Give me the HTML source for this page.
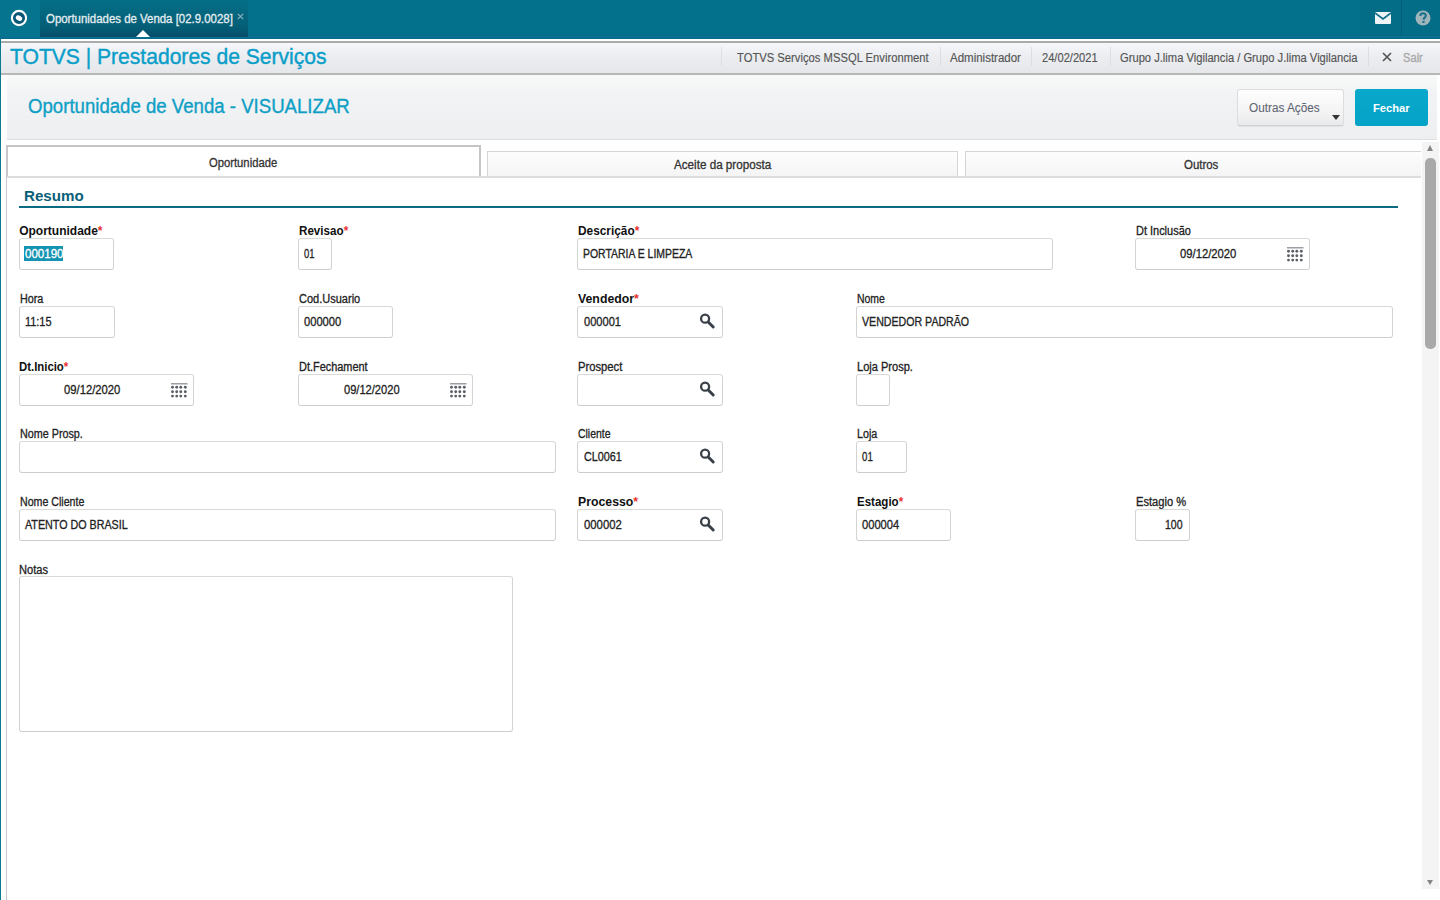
<!DOCTYPE html>
<html><head><meta charset="utf-8">
<style>
*{box-sizing:border-box;margin:0;padding:0}
html,body{width:1440px;height:900px;overflow:hidden;background:#fff;font-family:"Liberation Sans",sans-serif;position:relative}
.abs{position:absolute}
.tx{position:absolute;line-height:1;white-space:nowrap;transform-origin:0 50%;-webkit-text-stroke:0.3px}
.tx[style*="bold"]{-webkit-text-stroke:0}
.inp{position:absolute;height:32px;border:1px solid #d3d3d3;border-top-color:#d9d9d9;border-bottom-color:#cdcdcd;border-radius:3px;background:#fff}
</style></head><body>

<div class="abs" style="left:0;top:0;width:1440px;height:39px;background:#04718c"></div>
<div class="abs" style="left:0;top:35px;width:1440px;height:4px;background:linear-gradient(#056a85,#0a7499 50%,#046682)"></div>
<div class="abs" style="left:0;top:0;width:40px;height:36px;background:#05748e"></div>
<div class="abs" style="left:40px;top:0;width:208px;height:37px;background:linear-gradient(#056f88,#045d75 75%,#064d6a)"></div>
<svg class="abs" style="left:10px;top:9px" width="18" height="18" viewBox="0 0 18 18"><circle cx="9" cy="9" r="7.1" fill="#0a5878" stroke="#fff" stroke-width="2.1"/><ellipse cx="9" cy="9.1" rx="3.4" ry="2.5" transform="rotate(30 9 9.1)" fill="#fff"/></svg>
<div class="tx" style="left:45.80px;top:13px;font-size:12px;color:#e4eef1;transform:scaleX(0.9526);">Oportunidades de Venda [02.9.0028]</div>
<svg class="abs" style="left:237px;top:13px" width="7" height="7" viewBox="0 0 7 7"><path d="M0.8 0.8 L6.2 6.2 M6.2 0.8 L0.8 6.2" stroke="#8fb6c4" stroke-width="1.1"/></svg>
<div class="abs" style="left:136.2px;top:29.7px;width:0;height:0;border-left:7.6px solid transparent;border-right:7.6px solid transparent;border-bottom:7.1px solid #fff"></div>
<div class="abs" style="left:1360px;top:0;width:80px;height:36px;background:rgba(0,40,60,0.06)"></div>
<div class="abs" style="left:1401px;top:0;width:1px;height:36px;background:rgba(0,50,70,0.25)"></div>
<svg class="abs" style="left:1375px;top:12px" width="16" height="12" viewBox="0 0 16 12"><rect x="0" y="0" width="16" height="12" rx="1" fill="#eef3f5"/><path d="M0 1 L8 7 L16 1" fill="none" stroke="#0a6f88" stroke-width="1.6"/></svg>
<svg class="abs" style="left:1415px;top:10px" width="16" height="16" viewBox="0 0 16 16"><circle cx="8" cy="8" r="7.5" fill="#9fb5bc"/><path d="M5.3 6 Q5.3 3.2 8 3.2 Q10.8 3.2 10.8 5.8 Q10.8 7.3 9 8.2 L8.6 9.8" fill="none" stroke="#1a7088" stroke-width="2"/><rect x="7.4" y="11" width="2.2" height="2" fill="#1a7088"/></svg>
<div class="abs" style="left:0;top:39px;width:1440px;height:2px;background:#fff"></div>
<div class="abs" style="left:0;top:41px;width:1440px;height:34px;background:linear-gradient(#f6f7fa,#eceef1 40%,#e5e7ea);border-top:2px solid #a9abab;border-bottom:2px solid #b6b8b8"></div>
<div class="tx" style="left:10.00px;top:46px;font-size:22px;color:#0a9ec9;transform:scaleX(0.9577);-webkit-text-stroke:0.4px">TOTVS | Prestadores de Serviços</div>
<div class="abs" style="left:721px;top:47px;width:1px;height:19px;background:#dcdfe2"></div>
<div class="abs" style="left:940px;top:47px;width:1px;height:19px;background:#dcdfe2"></div>
<div class="abs" style="left:1031px;top:47px;width:1px;height:19px;background:#dcdfe2"></div>
<div class="abs" style="left:1110px;top:47px;width:1px;height:19px;background:#dcdfe2"></div>
<div class="abs" style="left:1368px;top:47px;width:1px;height:19px;background:#dcdfe2"></div>
<div class="tx" style="left:737.00px;top:52px;font-size:12px;color:#555;transform:scaleX(0.9361);-webkit-text-stroke:0.15px">TOTVS Serviços MSSQL Environment</div>
<div class="tx" style="left:950.30px;top:52px;font-size:12px;color:#555;transform:scaleX(0.9581);-webkit-text-stroke:0.15px">Administrador</div>
<div class="tx" style="left:1042.20px;top:52px;font-size:12px;color:#555;transform:scaleX(0.9267);-webkit-text-stroke:0.15px">24/02/2021</div>
<div class="tx" style="left:1120.30px;top:52px;font-size:12px;color:#555;transform:scaleX(0.9314);-webkit-text-stroke:0.15px">Grupo J.lima Vigilancia / Grupo J.lima Vigilancia</div>
<div class="tx" style="left:1403.00px;top:52px;font-size:12px;color:#a8a8a8;transform:scaleX(0.9286);">Sair</div>
<svg class="abs" style="left:1382px;top:52px" width="10" height="10" viewBox="0 0 10 10"><path d="M1 1 L9 9 M9 1 L1 9" stroke="#555" stroke-width="1.7"/></svg>
<div class="abs" style="left:0;top:39px;width:1px;height:861px;background:#0b7a8f"></div>
<div class="abs" style="left:7px;top:75px;width:1430px;height:65px;background:linear-gradient(#f8f9f9,#f2f3f4 30%,#eeeff0);border-bottom:1.5px solid #dcdedf"></div>
<div class="tx" style="left:28.00px;top:96px;font-size:20px;color:#0e9fc6;transform:scaleX(0.9306);-webkit-text-stroke:0.35px">Oportunidade de Venda - VISUALIZAR</div>
<div class="abs" style="left:1237px;top:89px;width:107px;height:37px;border:1px solid #dcdddf;border-bottom-color:#cfd0d2;border-radius:3px;background:linear-gradient(#fefefe,#f4f4f5 60%,#e9eaeb);box-shadow:0 1px 1px rgba(0,0,0,0.06)"></div>
<div class="tx" style="left:1248.70px;top:102px;font-size:12px;color:#5f6674;transform:scaleX(0.9806);-webkit-text-stroke:0.1px">Outras Ações</div>
<div class="abs" style="left:1332px;top:115px;width:0;height:0;border-left:4.5px solid transparent;border-right:4.5px solid transparent;border-top:5px solid #333"></div>
<div class="abs" style="left:1355px;top:89px;width:73px;height:37px;border-radius:3px;background:linear-gradient(#0aa9cc,#03a2c6)"></div>
<div class="tx" style="left:1372.80px;top:103px;font-size:11px;color:#fff;font-weight:bold;transform:scaleX(1.0108);">Fechar</div>
<div class="abs" style="left:6px;top:145px;width:475px;height:32px;background:#fff;border:2px solid #c4c5c6;border-bottom:none"></div>
<div class="abs" style="left:487px;top:151px;width:471px;height:26px;border:1px solid #d4d5d6;border-bottom:none;background:linear-gradient(#fdfdfd,#f4f4f4)"></div>
<div class="abs" style="left:965px;top:151px;width:456px;height:26px;border:1px solid #d4d5d6;border-bottom:none;border-right:none;background:linear-gradient(#fdfdfd,#f4f4f4)"></div>
<div class="abs" style="left:6px;top:176px;width:1415px;height:2px;background:#dcdddd"></div>
<div class="abs" style="left:6px;top:145px;width:1px;height:755px;background:#c8c9ca"></div>
<div class="tx" style="left:209.40px;top:157px;font-size:12px;color:#333;transform:scaleX(0.9370);">Oportunidade</div>
<div class="tx" style="left:673.50px;top:159px;font-size:12px;color:#333;transform:scaleX(0.9720);">Aceite da proposta</div>
<div class="tx" style="left:1184.40px;top:159px;font-size:12px;color:#333;transform:scaleX(0.9528);">Outros</div>
<div class="tx" style="left:24.00px;top:188px;font-size:15px;color:#0a5f78;font-weight:bold;transform:scaleX(1.0102);">Resumo</div>
<div class="abs" style="left:19px;top:206px;width:1379px;height:2px;background:#0b6b84"></div>
<div class="abs" style="left:1422px;top:142px;width:17px;height:747px;background:#f4f4f4"></div>
<div class="abs" style="left:1425px;top:158px;width:10.5px;height:191px;background:#a9a9a9;border-radius:5px"></div>
<div class="abs" style="left:1426.5px;top:144.5px;width:0;height:0;border-left:3.6px solid transparent;border-right:3.6px solid transparent;border-bottom:6.6px solid #858585"></div>
<div class="abs" style="left:1426.7px;top:879.5px;width:0;height:0;border-left:3.5px solid transparent;border-right:3.5px solid transparent;border-top:5.6px solid #858585"></div>
<div class="tx" style="left:19.20px;top:225px;font-size:12px;color:#111;font-weight:bold;">Oportunidade<span style="color:#e8322e">*</span></div>
<div class="inp" style="left:19px;top:238px;width:95px;height:32px"></div>
<div class="abs" style="left:24px;top:246px;width:39px;height:15px;background:#1593b3"></div>
<div class="tx" style="left:24.50px;top:248px;font-size:12px;color:#fff;transform:scaleX(0.9625);">000190</div>
<div class="tx" style="left:298.75px;top:225px;font-size:12px;color:#111;font-weight:bold;transform:scaleX(0.9696);">Revisao<span style="color:#e8322e">*</span></div>
<div class="inp" style="left:298px;top:238px;width:34px;height:32px"></div>
<div class="tx" style="left:304.00px;top:248px;font-size:12px;color:#222;transform:scaleX(0.7857);">01</div>
<div class="tx" style="left:578.00px;top:225px;font-size:12px;color:#111;font-weight:bold;transform:scaleX(0.9877);">Descrição<span style="color:#e8322e">*</span></div>
<div class="inp" style="left:577px;top:238px;width:476px;height:32px"></div>
<div class="tx" style="left:583.00px;top:248px;font-size:12px;color:#222;transform:scaleX(0.8698);">PORTARIA E LIMPEZA</div>
<div class="tx" style="left:1136.00px;top:225px;font-size:12px;color:#222;transform:scaleX(0.9133);">Dt Inclusão</div>
<div class="inp" style="left:1135px;top:238px;width:175px;height:32px"></div>
<div class="tx" style="left:1180.40px;top:248px;font-size:12px;color:#222;transform:scaleX(0.9383);">09/12/2020</div>
<svg class="abs" style="left:1287.3px;top:246.6px" width="17" height="15" viewBox="0 0 17 15"><rect x="0" y="0" width="16.5" height="1.5" fill="#9a9ea3"/><circle cx="1.5" cy="4.2" r="1.45" fill="#5b6068"/><circle cx="5.7" cy="4.2" r="1.45" fill="#5b6068"/><circle cx="9.8" cy="4.2" r="1.45" fill="#5b6068"/><circle cx="14.3" cy="4.2" r="1.45" fill="#5b6068"/><circle cx="1.5" cy="8.7" r="1.45" fill="#5b6068"/><circle cx="5.7" cy="8.7" r="1.45" fill="#5b6068"/><circle cx="9.8" cy="8.7" r="1.45" fill="#5b6068"/><circle cx="14.3" cy="8.7" r="1.45" fill="#5b6068"/><circle cx="1.5" cy="13.1" r="1.45" fill="#5b6068"/><circle cx="5.7" cy="13.1" r="1.45" fill="#5b6068"/><circle cx="9.8" cy="13.1" r="1.45" fill="#5b6068"/><circle cx="14.3" cy="13.1" r="1.45" fill="#5b6068"/></svg>
<div class="tx" style="left:19.70px;top:293px;font-size:12px;color:#222;transform:scaleX(0.8962);">Hora</div>
<div class="inp" style="left:19px;top:306px;width:96px;height:32px"></div>
<div class="tx" style="left:25.30px;top:316px;font-size:12px;color:#222;transform:scaleX(0.9103);">11:15</div>
<div class="tx" style="left:298.60px;top:293px;font-size:12px;color:#222;transform:scaleX(0.9179);">Cod.Usuario</div>
<div class="inp" style="left:298px;top:306px;width:95px;height:32px"></div>
<div class="tx" style="left:303.90px;top:316px;font-size:12px;color:#222;transform:scaleX(0.9300);">000000</div>
<div class="tx" style="left:577.50px;top:293px;font-size:12px;color:#111;font-weight:bold;transform:scaleX(1.0255);">Vendedor<span style="color:#e8322e">*</span></div>
<div class="inp" style="left:577px;top:306px;width:146px;height:32px"></div>
<div class="tx" style="left:583.90px;top:316px;font-size:12px;color:#222;transform:scaleX(0.9225);">000001</div>
<svg class="abs" style="left:697px;top:310px" width="20" height="22" viewBox="0 0 20 22"><circle cx="8.1" cy="8.7" r="4" fill="none" stroke="#3a4048" stroke-width="2.3"/><path d="M11.2 12 L16.2 17" stroke="#3a4048" stroke-width="3" stroke-linecap="round"/></svg>
<div class="tx" style="left:856.70px;top:293px;font-size:12px;color:#222;transform:scaleX(0.8688);">Nome</div>
<div class="inp" style="left:856px;top:306px;width:537px;height:32px"></div>
<div class="tx" style="left:862.20px;top:316px;font-size:12px;color:#222;transform:scaleX(0.8843);">VENDEDOR PADRÃO</div>
<div class="tx" style="left:19.40px;top:361px;font-size:12px;color:#111;font-weight:bold;transform:scaleX(0.9468);">Dt.Inicio<span style="color:#e8322e">*</span></div>
<div class="inp" style="left:19px;top:374px;width:175px;height:32px"></div>
<div class="tx" style="left:64.20px;top:384px;font-size:12px;color:#222;transform:scaleX(0.9367);">09/12/2020</div>
<svg class="abs" style="left:171.3px;top:382.6px" width="17" height="15" viewBox="0 0 17 15"><rect x="0" y="0" width="16.5" height="1.5" fill="#9a9ea3"/><circle cx="1.5" cy="4.2" r="1.45" fill="#5b6068"/><circle cx="5.7" cy="4.2" r="1.45" fill="#5b6068"/><circle cx="9.8" cy="4.2" r="1.45" fill="#5b6068"/><circle cx="14.3" cy="4.2" r="1.45" fill="#5b6068"/><circle cx="1.5" cy="8.7" r="1.45" fill="#5b6068"/><circle cx="5.7" cy="8.7" r="1.45" fill="#5b6068"/><circle cx="9.8" cy="8.7" r="1.45" fill="#5b6068"/><circle cx="14.3" cy="8.7" r="1.45" fill="#5b6068"/><circle cx="1.5" cy="13.1" r="1.45" fill="#5b6068"/><circle cx="5.7" cy="13.1" r="1.45" fill="#5b6068"/><circle cx="9.8" cy="13.1" r="1.45" fill="#5b6068"/><circle cx="14.3" cy="13.1" r="1.45" fill="#5b6068"/></svg>
<div class="tx" style="left:298.60px;top:361px;font-size:12px;color:#222;transform:scaleX(0.9105);">Dt.Fechament</div>
<div class="inp" style="left:298px;top:374px;width:175px;height:32px"></div>
<div class="tx" style="left:343.50px;top:384px;font-size:12px;color:#222;transform:scaleX(0.9250);">09/12/2020</div>
<svg class="abs" style="left:450.3px;top:382.6px" width="17" height="15" viewBox="0 0 17 15"><rect x="0" y="0" width="16.5" height="1.5" fill="#9a9ea3"/><circle cx="1.5" cy="4.2" r="1.45" fill="#5b6068"/><circle cx="5.7" cy="4.2" r="1.45" fill="#5b6068"/><circle cx="9.8" cy="4.2" r="1.45" fill="#5b6068"/><circle cx="14.3" cy="4.2" r="1.45" fill="#5b6068"/><circle cx="1.5" cy="8.7" r="1.45" fill="#5b6068"/><circle cx="5.7" cy="8.7" r="1.45" fill="#5b6068"/><circle cx="9.8" cy="8.7" r="1.45" fill="#5b6068"/><circle cx="14.3" cy="8.7" r="1.45" fill="#5b6068"/><circle cx="1.5" cy="13.1" r="1.45" fill="#5b6068"/><circle cx="5.7" cy="13.1" r="1.45" fill="#5b6068"/><circle cx="9.8" cy="13.1" r="1.45" fill="#5b6068"/><circle cx="14.3" cy="13.1" r="1.45" fill="#5b6068"/></svg>
<div class="tx" style="left:577.90px;top:361px;font-size:12px;color:#222;transform:scaleX(0.9354);">Prospect</div>
<div class="inp" style="left:577px;top:374px;width:146px;height:32px"></div>
<svg class="abs" style="left:697px;top:378px" width="20" height="22" viewBox="0 0 20 22"><circle cx="8.1" cy="8.7" r="4" fill="none" stroke="#3a4048" stroke-width="2.3"/><path d="M11.2 12 L16.2 17" stroke="#3a4048" stroke-width="3" stroke-linecap="round"/></svg>
<div class="tx" style="left:856.70px;top:361px;font-size:12px;color:#222;transform:scaleX(0.9213);">Loja Prosp.</div>
<div class="inp" style="left:856px;top:374px;width:34px;height:32px"></div>
<div class="tx" style="left:19.70px;top:428px;font-size:12px;color:#222;transform:scaleX(0.8971);">Nome Prosp.</div>
<div class="inp" style="left:19px;top:441px;width:537px;height:32px"></div>
<div class="tx" style="left:577.90px;top:428px;font-size:12px;color:#222;transform:scaleX(0.8711);">Cliente</div>
<div class="inp" style="left:577px;top:441px;width:146px;height:32px"></div>
<div class="tx" style="left:583.90px;top:451px;font-size:12px;color:#222;transform:scaleX(0.9000);">CL0061</div>
<svg class="abs" style="left:697px;top:445px" width="20" height="22" viewBox="0 0 20 22"><circle cx="8.1" cy="8.7" r="4" fill="none" stroke="#3a4048" stroke-width="2.3"/><path d="M11.2 12 L16.2 17" stroke="#3a4048" stroke-width="3" stroke-linecap="round"/></svg>
<div class="tx" style="left:856.70px;top:428px;font-size:12px;color:#222;transform:scaleX(0.8913);">Loja</div>
<div class="inp" style="left:856px;top:441px;width:51px;height:32px"></div>
<div class="tx" style="left:862.00px;top:451px;font-size:12px;color:#222;transform:scaleX(0.8071);">01</div>
<div class="tx" style="left:19.70px;top:496px;font-size:12px;color:#222;transform:scaleX(0.8849);">Nome Cliente</div>
<div class="inp" style="left:19px;top:509px;width:537px;height:32px"></div>
<div class="tx" style="left:24.60px;top:519px;font-size:12px;color:#222;transform:scaleX(0.8939);">ATENTO DO BRASIL</div>
<div class="tx" style="left:577.90px;top:496px;font-size:12px;color:#111;font-weight:bold;transform:scaleX(1.0241);">Processo<span style="color:#e8322e">*</span></div>
<div class="inp" style="left:577px;top:509px;width:146px;height:32px"></div>
<div class="tx" style="left:583.90px;top:519px;font-size:12px;color:#222;transform:scaleX(0.9450);">000002</div>
<svg class="abs" style="left:697px;top:513px" width="20" height="22" viewBox="0 0 20 22"><circle cx="8.1" cy="8.7" r="4" fill="none" stroke="#3a4048" stroke-width="2.3"/><path d="M11.2 12 L16.2 17" stroke="#3a4048" stroke-width="3" stroke-linecap="round"/></svg>
<div class="tx" style="left:856.70px;top:496px;font-size:12px;color:#111;font-weight:bold;transform:scaleX(0.9605);">Estagio<span style="color:#e8322e">*</span></div>
<div class="inp" style="left:856px;top:509px;width:95px;height:32px"></div>
<div class="tx" style="left:862.20px;top:519px;font-size:12px;color:#222;transform:scaleX(0.9300);">000004</div>
<div class="tx" style="left:1135.80px;top:496px;font-size:12px;color:#222;transform:scaleX(0.9259);">Estagio %</div>
<div class="inp" style="left:1135px;top:509px;width:55px;height:32px"></div>
<div class="tx" style="left:1165.40px;top:519px;font-size:12px;color:#222;transform:scaleX(0.8750);">100</div>
<div class="tx" style="left:19.20px;top:564px;font-size:12px;color:#222;transform:scaleX(0.9258);">Notas</div>
<div class="inp" style="left:19px;top:576px;width:494px;height:156px"></div>
</body></html>
